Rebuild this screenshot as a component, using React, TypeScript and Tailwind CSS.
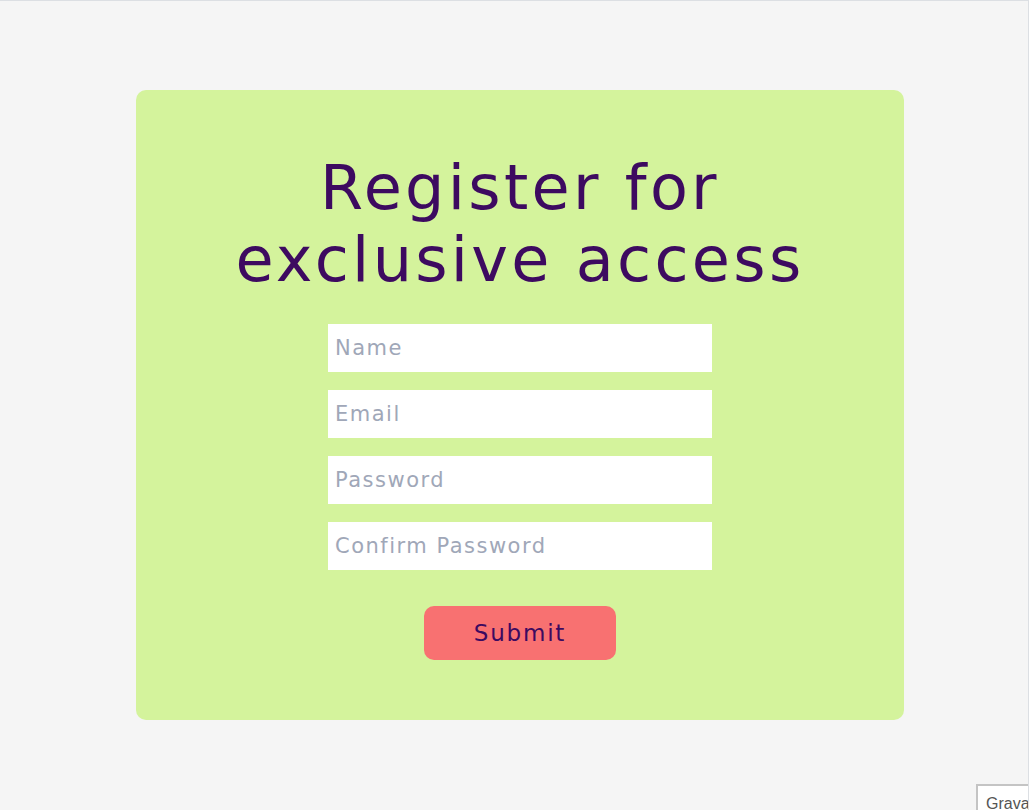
import React from "react";

export default function App() {
  return (
    <div className="relative w-[1029px] h-[810px] overflow-hidden bg-[#f5f5f5] border-t border-r border-[#dcdfe3]" style={{ fontFamily: '"DejaVu Sans", sans-serif' }}>
      <div className="flex pl-[136px] pt-[89px]">
        <div className="w-[768px] h-[630px] bg-[#d4f39c] rounded-[10px] flex flex-col items-center pt-[62px]">
          <h1 className="text-[62px] leading-[72px] text-[#3d0a60] text-center font-normal tracking-[3.3px]">
            Register for<br />exclusive access
          </h1>
          <div className="flex flex-col gap-[18px] mt-[28px]">
            {["Name", "Email", "Password", "Confirm Password"].map((p) => (
              <input
                key={p}
                placeholder={p}
                className="w-[384px] h-[48px] bg-white px-[7px] text-[21px] tracking-[1.5px] text-[#3d0a60] placeholder:text-[#a0a7b8] outline-none"
              />
            ))}
          </div>
          <button className="mt-[36px] w-[192px] h-[54px] rounded-[10px] bg-[#f87171] text-[#3d0a60] text-[23px] tracking-[1.8px]">
            Submit
          </button>
        </div>
      </div>
      <div className="absolute left-[976px] top-[783px] w-[60px] h-[30px] bg-white border-2 border-[#c4c4c4] pl-[8px] pt-[10px] text-[16px] leading-none text-[#555]" style={{ fontFamily: '"Liberation Sans", sans-serif' }}>
        Gravatar
      </div>
    </div>
  );
}
